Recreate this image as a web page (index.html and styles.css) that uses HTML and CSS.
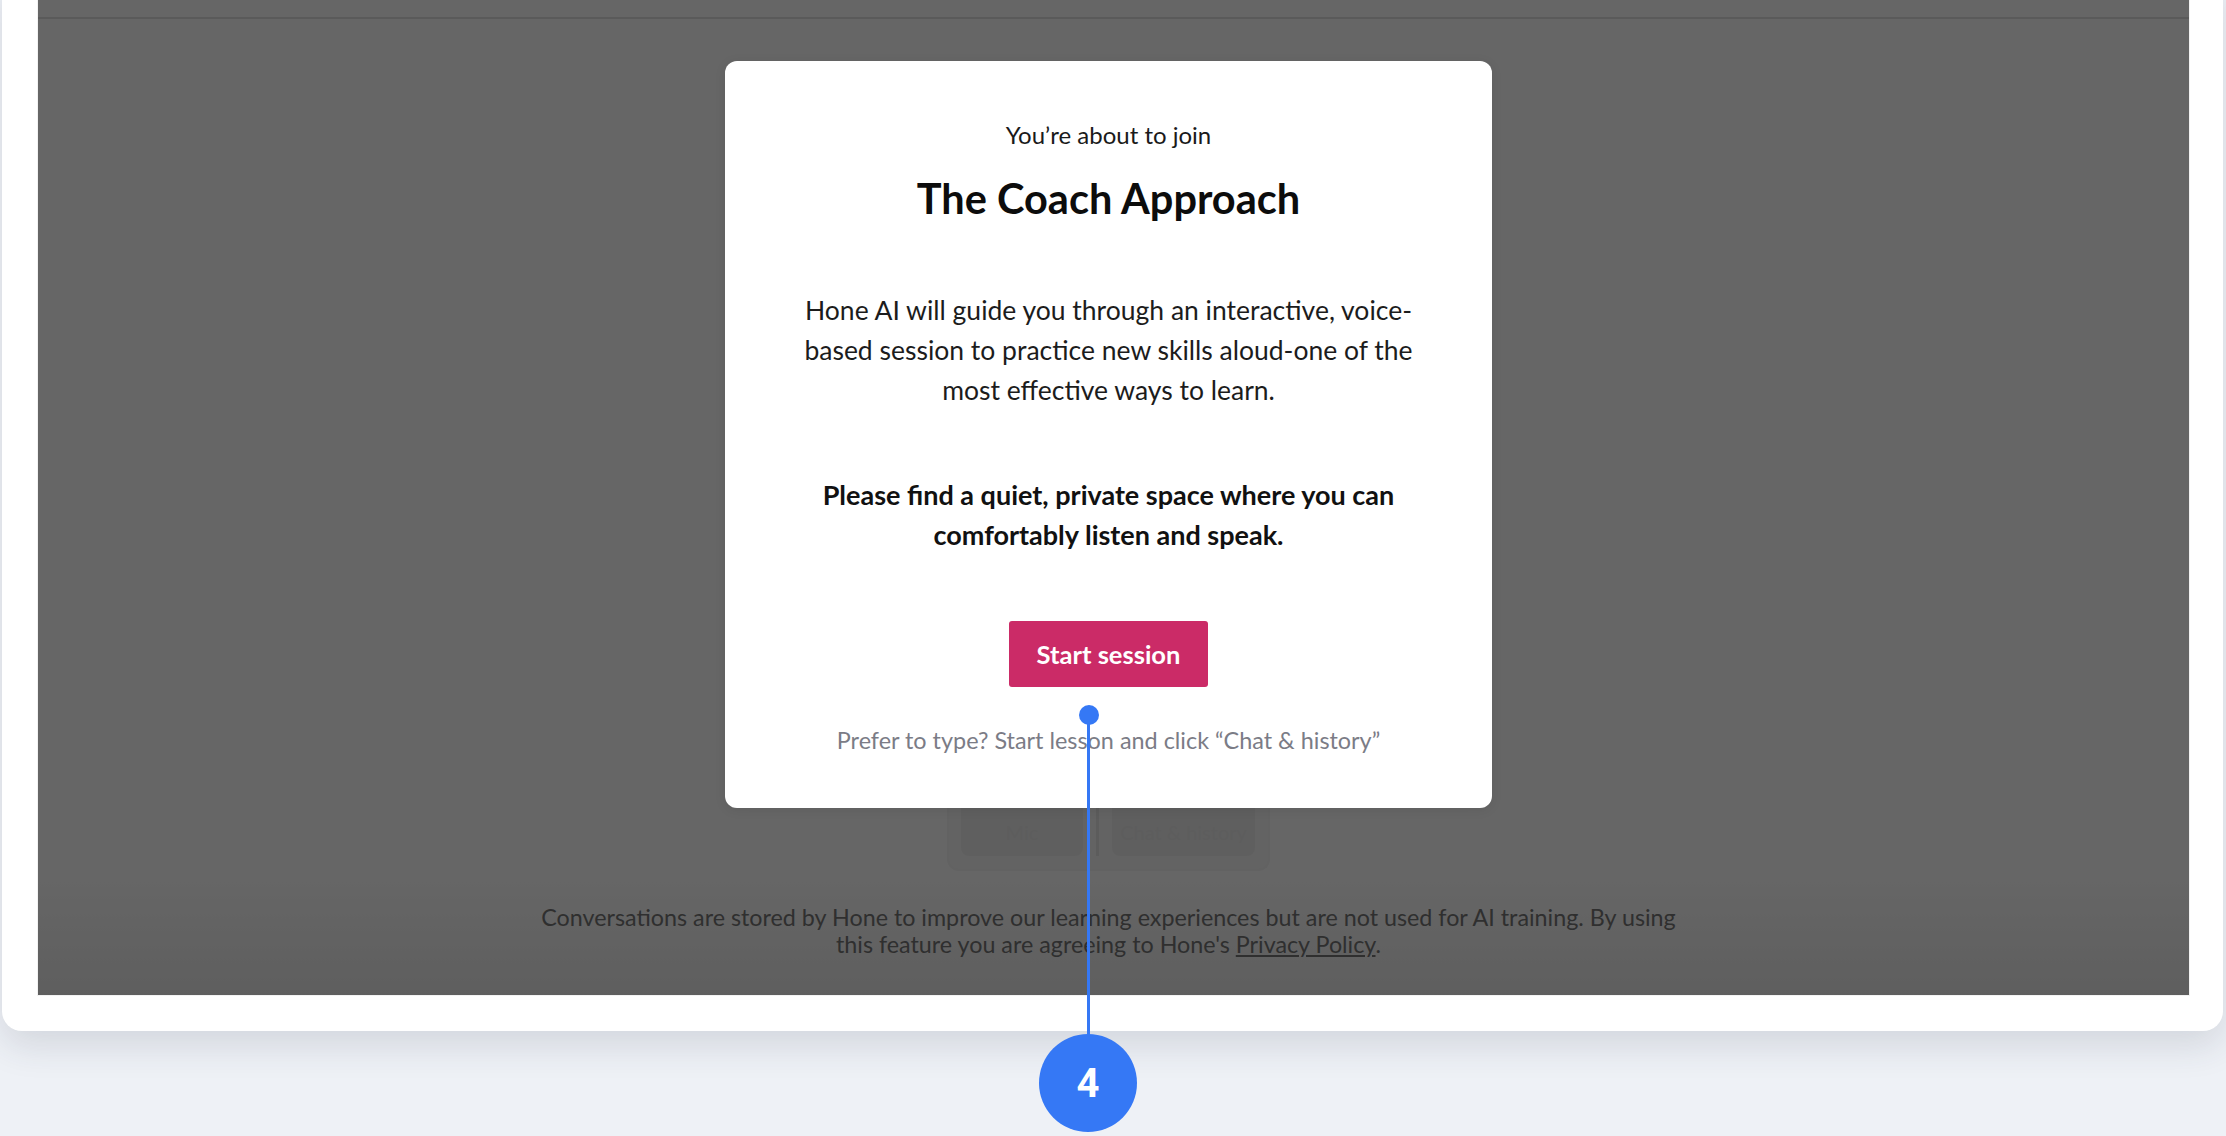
FILE: index.html
```html
<!DOCTYPE html>
<html lang="en">
<head>
  <meta charset="UTF-8">
  <title>Hone AI – Start session</title>
  <link rel="stylesheet" href="styles.css">
</head>
<body>
  <div class="frame">
    <div class="app">
      <div class="app-header"></div>

      <div class="app-body">
        <div class="mode-box">
          <div class="mode-tile">Mic</div>
          <div class="mode-divider"></div>
          <div class="mode-tile">Chat &amp; history</div>
        </div>
        <p class="disclaimer">
          Conversations are stored by Hone to improve our learning experiences but are not used for AI training. By using
          this feature you are agreeing to Hone's <a href="#">Privacy Policy</a>.
        </p>
      </div>

      <div class="overlay">
        <div class="modal">
          <div class="modal-kicker">You’re about to join</div>
          <h1 class="modal-title">The Coach Approach</h1>
          <p class="modal-text">Hone AI will guide you through an interactive, voice-based session to practice new skills aloud-one of the most effective ways to learn.</p>
          <p class="modal-strong">Please find a quiet, private space where you can comfortably listen and speak.</p>
          <button class="start-btn">Start session</button>
          <div class="modal-hint">Prefer to type? Start lesson and click “Chat &amp; history”</div>
        </div>
      </div>
    </div>
  </div>

  <div class="marker">
    <div class="marker-dot"></div>
    <div class="marker-line"></div>
    <div class="marker-badge">4</div>
  </div>
</body>
</html>
```
FILE: styles.css
```css
body {
  margin: 0;
  height: 1136px;
  overflow: hidden;
  background-color: #eef1f6;
  font-family: Lato, "Noto Sans", sans-serif;
  position: relative;
}

.frame {
  margin: -20px 0 0 2px;
  width: 2221px;
  height: 1051px;
  box-sizing: border-box;
  padding: 20px 34px 36px 36px;
  background: #ffffff;
  border-radius: 0 0 20px 20px;
  box-shadow: 0 14px 36px rgba(40, 50, 70, 0.14);
}

.app {
  position: relative;
  height: 995px;
  background: linear-gradient(#ffffff 88%, #ececec);
  box-shadow: 0 0 0 1px #f2f2f2;
}

.app-header {
  height: 17px;
  border-bottom: 2px solid #e2e2e2;
}

.app-body {
  display: flex;
  flex-direction: column;
  align-items: center;
  padding: 0 10px 0 0;
}

.mode-box {
  margin-top: 783px;
  width: 323px;
  height: 69px;
  box-sizing: border-box;
  border: 2px solid #f4f4f4;
  border-top: none;
  border-radius: 0 0 12px 12px;
  background: #f8f8f8;
  display: flex;
  padding: 0 13px 13px 12px;
}

.mode-tile {
  flex: 1;
  background: #eeeeee;
  border-radius: 0 0 8px 8px;
  color: #e8e8e8;
  font-size: 20px;
  white-space: nowrap;
  overflow: hidden;
  display: flex;
  justify-content: center;
  padding-top: 18px;
}

.mode-tile:last-child {
  flex: 0 0 143px;
}

.mode-divider {
  width: 3px;
  margin: 0 13px;
  background: #e6e6e6;
}

.disclaimer {
  margin: 33px 0 0;
  width: 1150px;
  text-align: center;
  color: #767676;
  font-size: 23.3px;
  line-height: 27px;
}

.disclaimer a {
  color: #767676;
}

.overlay {
  position: absolute;
  top: 0;
  left: 0;
  right: 0;
  bottom: 0;
  background: rgba(0, 0, 0, 0.6);
  display: flex;
  flex-direction: column;
  align-items: center;
  padding: 61px 10px 0 0;
}

.modal {
  width: 767px;
  height: 747px;
  box-sizing: border-box;
  background: #ffffff;
  border-radius: 12px;
  box-shadow: 0 2px 12px rgba(0, 0, 0, 0.08);
  padding: 58px 0 0;
  display: flex;
  flex-direction: column;
  align-items: center;
  text-align: center;
  color: #111;
}

.modal-kicker {
  font-size: 24px;
  line-height: 32px;
  color: #1a1a1a;
}

.modal-title {
  margin: 23px 0 0;
  font-size: 41.5px;
  line-height: 48px;
  font-weight: 700;
  color: #0c0c0c;
}

.modal-text {
  margin: 68px 0 0;
  width: 630px;
  font-size: 26.5px;
  line-height: 40px;
  color: #1c1c1c;
}

.modal-strong {
  margin: 65px 0 0;
  width: 640px;
  font-size: 27px;
  line-height: 40px;
  font-weight: 700;
  color: #111;
}

.start-btn {
  margin-top: 66px;
  width: 199px;
  height: 66px;
  border: none;
  border-radius: 3px;
  background-color: #cb2b67;
  color: #fff;
  font-family: inherit;
  font-size: 25.5px;
  font-weight: 700;
  cursor: pointer;
}

.modal-hint {
  margin-top: 38px;
  font-size: 23.4px;
  line-height: 30px;
  color: #7b7c86;
}

.marker {
  position: absolute;
  left: 1039px;
  top: 705px;
  width: 98px;
  height: 428px;
}

.marker-dot {
  position: absolute;
  left: 40px;
  top: 0;
  width: 20px;
  height: 20px;
  border-radius: 50%;
  background: #3578f5;
}

.marker-line {
  position: absolute;
  left: 48px;
  top: 10px;
  width: 3px;
  height: 322px;
  background: #3578f5;
}

.marker-badge {
  position: absolute;
  left: 0;
  top: 329px;
  width: 98px;
  height: 98px;
  border-radius: 50%;
  background: #3578f5;
  color: #fff;
  font-family: Roboto, "Noto Sans", sans-serif;
  font-weight: 700;
  font-size: 40px;
  display: flex;
  align-items: center;
  justify-content: center;
}
```
